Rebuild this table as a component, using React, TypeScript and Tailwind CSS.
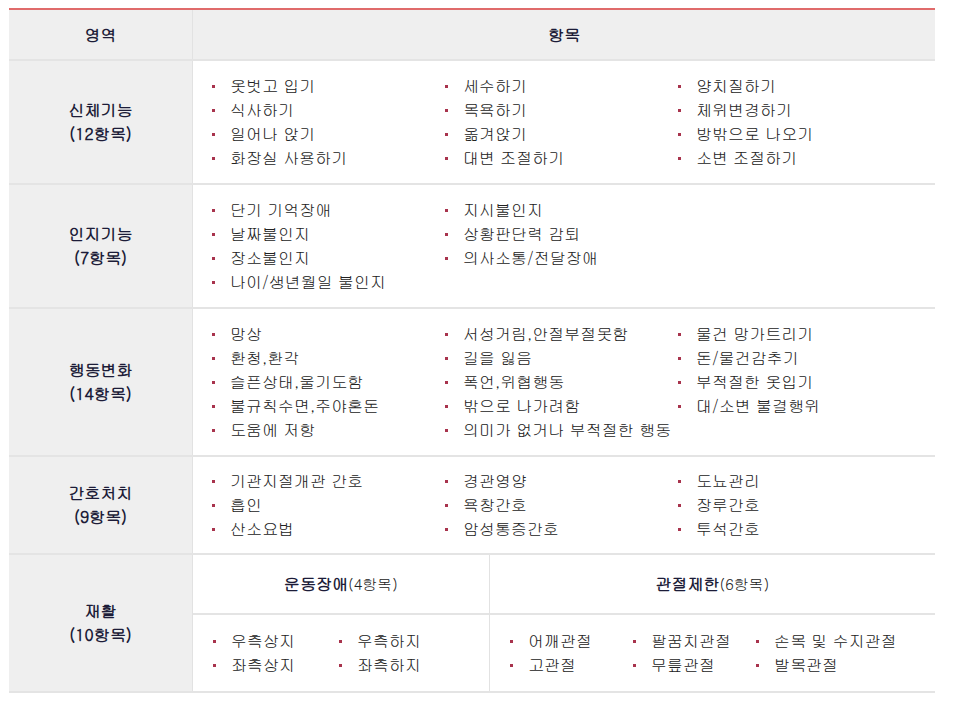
const font = "font-['Gulim','Dotum','Noto_Sans_CJK_KR',sans-serif]";

type Row = { title: string; count: string; cols: string[][]; pad: string };

const rows: Row[] = [
  {
    title: "신체기능",
    count: "(12항목)",
    pad: "py-[13px]",
    cols: [
      ["옷벗고 입기", "식사하기", "일어나 앉기", "화장실 사용하기"],
      ["세수하기", "목욕하기", "옮겨앉기", "대변 조절하기"],
      ["양치질하기", "체위변경하기", "방밖으로 나오기", "소변 조절하기"],
    ],
  },
  {
    title: "인지기능",
    count: "(7항목)",
    pad: "py-[13px]",
    cols: [
      ["단기 기억장애", "날짜불인지", "장소불인지", "나이/생년월일 불인지"],
      ["지시불인지", "상황판단력 감퇴", "의사소통/전달장애"],
      [],
    ],
  },
  {
    title: "행동변화",
    count: "(14항목)",
    pad: "py-[13px]",
    cols: [
      ["망상", "환청,환각", "슬픈상태,울기도함", "불규칙수면,주야혼돈", "도움에 저항"],
      ["서성거림,안절부절못함", "길을 잃음", "폭언,위협행동", "밖으로 나가려함", "의미가 없거나 부적절한 행동"],
      ["물건 망가트리기", "돈/물건감추기", "부적절한 옷입기", "대/소변 불결행위"],
    ],
  },
  {
    title: "간호처치",
    count: "(9항목)",
    pad: "py-3",
    cols: [
      ["기관지절개관 간호", "흡인", "산소요법"],
      ["경관영양", "욕창간호", "암성통증간호"],
      ["도뇨관리", "장루간호", "투석간호"],
    ],
  },
];

function Item({ text }: { text: string }) {
  return (
    <li className="flex items-center h-6 whitespace-nowrap">
      <span className="w-[3px] h-[3px] bg-[#a8334d] shrink-0" />
      <span className="ml-[15px]">{text}</span>
    </li>
  );
}

function Label({ title, count }: { title: string; count: string }) {
  return (
    <div className="w-[184px] shrink-0 bg-[#efefef] border-r border-[#e2e2e2] flex flex-col items-center justify-center font-bold text-[#1c1c38] leading-6">
      <span>{title}</span>
      <span>{count}</span>
    </div>
  );
}

export default function App() {
  return (
    <div className={`${font} text-[16px] text-[#222] bg-white w-[960px] h-[703px] pt-2`}>
      <div className="ml-[9px] w-[926px] border-t-2 border-[#e06b6b]">
        {/* header */}
        <div className="flex h-[51px] border-b-2 border-[#e4e4e4] bg-[#efefef] font-bold text-[#1c1c38]">
          <div className="w-[184px] shrink-0 border-r border-[#e2e2e2] flex items-center justify-center">영역</div>
          <div className="flex-1 flex items-center justify-center">항목</div>
        </div>

        {rows.map((r) => (
          <div key={r.title} className="flex border-b-2 border-[#e4e4e4]">
            <Label title={r.title} count={r.count} />
            <div className={`flex-1 grid grid-cols-[233px_233px_233px] pl-[19px] ${r.pad}`}>
              {r.cols.map((c, i) => (
                <ul key={i}>
                  {c.map((t) => (
                    <Item key={t} text={t} />
                  ))}
                </ul>
              ))}
            </div>
          </div>
        ))}

        {/* 재활 */}
        <div className="flex border-b-2 border-[#e4e4e4]">
          <Label title="재활" count="(10항목)" />
          <div className="flex-1 flex">
            <div className="w-[297px] border-r border-[#e2e2e2] flex flex-col">
              <div className="h-[60px] border-b-2 border-[#e4e4e4] flex items-center justify-center">
                <span className="font-bold text-[#1c1c38]">운동장애</span>
                <span className="text-[15px]">(4항목)</span>
              </div>
              <div className="grid grid-cols-[126px_126px] pl-5 py-[14px]">
                <ul>
                  <Item text="우측상지" />
                  <Item text="좌측상지" />
                </ul>
                <ul>
                  <Item text="우측하지" />
                  <Item text="좌측하지" />
                </ul>
              </div>
            </div>
            <div className="flex-1 flex flex-col">
              <div className="h-[60px] border-b-2 border-[#e4e4e4] flex items-center justify-center">
                <span className="font-bold text-[#1c1c38]">관절제한</span>
                <span className="text-[15px]">(6항목)</span>
              </div>
              <div className="grid grid-cols-[123px_123px_123px] pl-5 py-[14px]">
                <ul>
                  <Item text="어깨관절" />
                  <Item text="고관절" />
                </ul>
                <ul>
                  <Item text="팔꿈치관절" />
                  <Item text="무릎관절" />
                </ul>
                <ul>
                  <Item text="손목 및 수지관절" />
                  <Item text="발목관절" />
                </ul>
              </div>
            </div>
          </div>
        </div>
      </div>
    </div>
  );
}
